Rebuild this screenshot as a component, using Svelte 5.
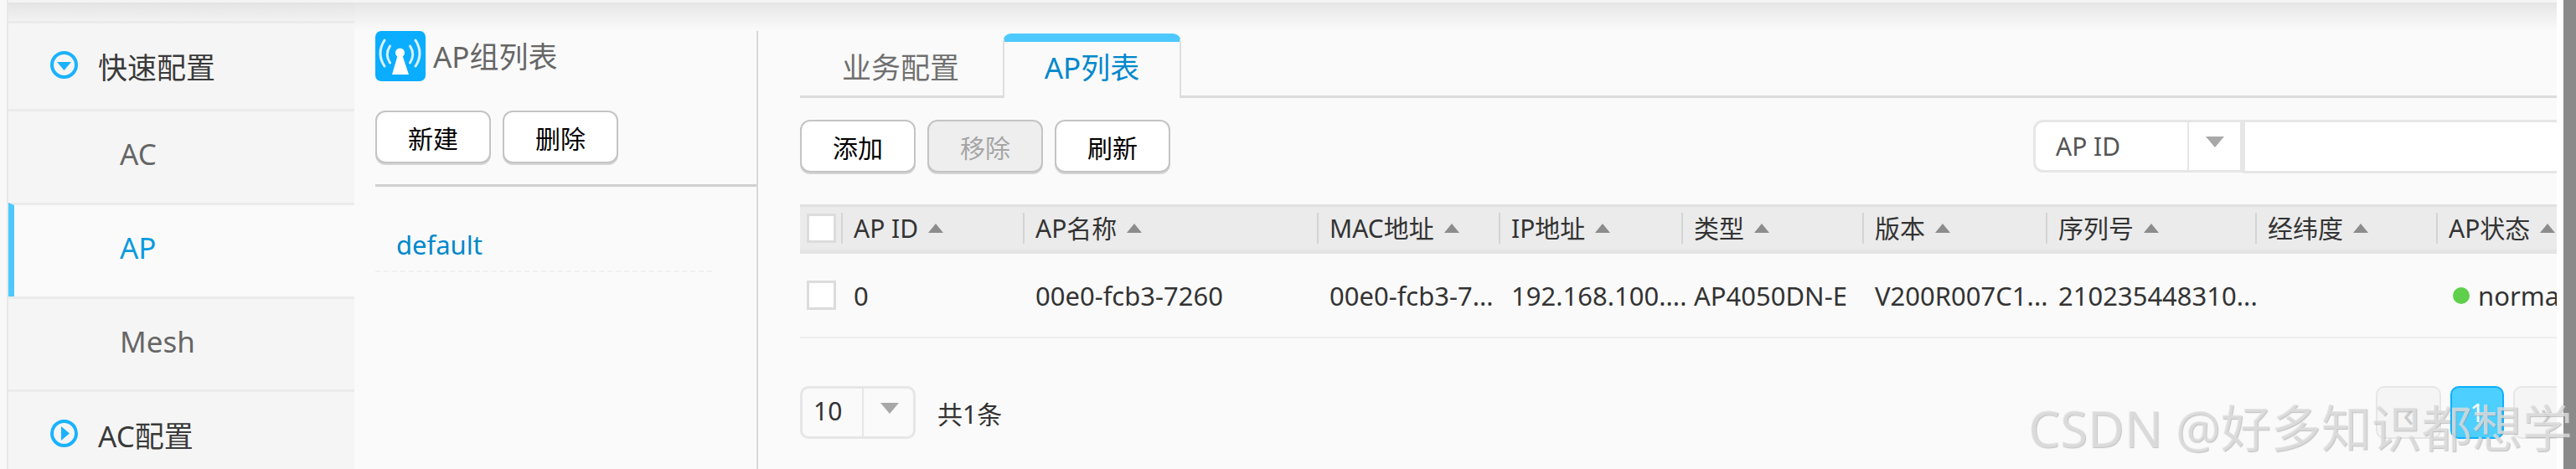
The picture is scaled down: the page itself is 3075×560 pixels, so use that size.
<script>
	const menu = [
		{ label: "快速配置", kind: "group", open: true, h: 105 },
		{ label: "AC", kind: "item", h: 112 },
		{ label: "AP", kind: "item", active: true, h: 112 },
		{ label: "Mesh", kind: "item", h: 111 },
		{ label: "AC配置", kind: "group", open: false, h: 95 }
	];
	const columns = [
		{ title: "AP ID", w: 217, value: "0" },
		{ title: "AP名称", w: 351, value: "00e0-fcb3-7260" },
		{ title: "MAC地址", w: 217, value: "00e0-fcb3-7..." },
		{ title: "IP地址", w: 218, value: "192.168.100...." },
		{ title: "类型", w: 216, value: "AP4050DN-E" },
		{ title: "版本", w: 219, value: "V200R007C1..." },
		{ title: "序列号", w: 250, value: "210235448310..." },
		{ title: "经纬度", w: 216, value: "" },
		{ title: "AP状态", w: 160, value: "normal", status: true }
	];
</script>

<div class="page">
	<div class="gutter"></div>
	<nav class="side">
		<div class="side__shade"></div>
		{#each menu as row}
			<div class="row row--{row.kind}" class:row--active={row.active} style="height: {row.h}px">
				{#if row.kind === "group"}
					<svg class="row__icon" width="33" height="33" viewBox="0 0 33 33">
						<circle cx="16.5" cy="16.5" r="14.5" fill="none" stroke="#1ab2ff" stroke-width="4" />
						{#if row.open}
							<path d="M8 13h17l-8.500 10z" fill="#1ab2ff" />
						{:else}
							<path d="M13 8l10 8.500-10 8.500z" fill="#1ab2ff" />
						{/if}
					</svg>
				{/if}
				<span>{row.label}</span>
			</div>
		{/each}
	</nav>

	<div class="content">
		<div class="shade"></div>
		<div class="panels">
			<section class="groups">
				<header class="groups__title">
					<svg width="60" height="60" viewBox="0 0 60 60">
						<rect width="60" height="60" rx="7" fill="#0aadff" />
						<g fill="none" stroke="#fff" stroke-width="3" stroke-linecap="round" opacity="0.85">
							<path d="M17.500 18Q11 28 17.500 38" />
							<path d="M41.500 18Q48 28 41.500 38" />
							<path d="M11 11Q1 27 11 42" />
							<path d="M48 11Q58 27 48 42" />
						</g>
						<circle cx="29.500" cy="26" r="5.500" fill="#fff" />
						<path d="M27 28h5l8 24H20z" fill="#fff" />
					</svg>
					<h2>AP组列表</h2>
				</header>
				<div class="btns btns--groups">
					<button class="btn">新建</button>
					<button class="btn">删除</button>
				</div>
				<div class="groups__list">
					<a class="groups__item" href="#default">default</a>
				</div>
			</section>

			<section class="main">
				<div class="tabs">
					<div class="tab">业务配置</div>
					<div class="tab tab--active">AP列表</div>
				</div>

				<div class="toolbar">
					<div class="btns">
						<button class="btn btn--wide">添加</button>
						<button class="btn btn--wide" disabled>移除</button>
						<button class="btn btn--wide">刷新</button>
					</div>
					<div class="search">
						<div class="select select--search">
							<span class="select__value">AP ID</span>
							<span class="select__arrow"></span>
						</div>
						<div class="search__input"></div>
					</div>
				</div>

				<div class="table">
					<div class="thead">
						<div class="check check--head"><span class="box"></span></div>
						{#each columns as col}
							<div class="th" style="width: {col.w}px">
								<span>{col.title}</span><i class="sort"></i>
							</div>
						{/each}
					</div>
					<div class="tbody">
						<div class="check"><span class="box"></span></div>
						{#each columns as col}
							<div class="td" class:td--status={col.status} style="width: {col.w}px">
								{#if col.status}<i class="dot"></i>{/if}{col.value}
							</div>
						{/each}
					</div>
				</div>

				<footer class="pager">
					<div class="pager__size">
						<div class="select select--size">
							<span class="select__value">10</span>
							<span class="select__arrow"></span>
						</div>
						<span class="pager__total">共1条</span>
					</div>
					<div class="pager__pages">
						<span class="page-btn page-btn--nav">‹</span>
						<span class="page-btn page-btn--on">1</span>
						<span class="page-btn page-btn--nav">›</span>
					</div>
				</footer>
			</section>
		</div>
	</div>

	<div class="edge"></div>
	<div class="scroll"></div>
	<div class="watermark">CSDN @好多知识都想学</div>
</div>

<style>
	:global(body) {
		margin: 0;
		background: #fafafa;
	}

	.page {
		position: relative;
		display: flex;
		width: 3075px;
		height: 560px;
		overflow: hidden;
		font-family: "Noto Sans", "Noto Sans CJK SC", sans-serif;
		font-size: 30px;
		color: #333;
		background: #fafafa;
	}

	.gutter {
		flex: none;
		width: 8px;
		background: #f8f8f8;
		border-right: 2px solid #e8e8e8;
	}

	.side {
		flex: none;
		width: 413px;
		background: #f5f5f5;
	}

	.side__shade {
		height: 22px;
		background: linear-gradient(#e4e4e4, #f2f2f2);
		border-top: 3px solid #f4f4f4;
	}

	.row {
		box-sizing: border-box;
		display: flex;
		border-top: 3px solid #ebebeb;
		font-size: 35px;
		line-height: 44px;
	}

	.row--group {
		align-items: flex-start;
		padding: 31px 0 0 50px;
		gap: 24px;
		color: #3a3a3a;
	}

	.row--item {
		align-items: center;
		padding: 0 0 7px 133px;
		color: #666;
	}

	.row--active {
		background: #fafafa;
		color: #0a9be0;
		border-left: 7px solid #4dc9ff;
		padding-left: 126px;
	}

	.row__icon {
		flex: none;
		margin-top: 2px;
	}

	.content {
		display: flex;
		flex: none;
		flex-direction: column;
		width: 2629px;
	}

	.shade {
		flex: none;
		height: 34px;
		border-top: 3px solid #f4f4f4;
		background: linear-gradient(#e6e6e6, #fafafa);
	}

	.panels {
		display: flex;
		flex: 1;
		min-height: 0;
	}

	.groups {
		box-sizing: border-box;
		flex: none;
		width: 482px;
		padding-left: 25px;
		border-right: 2px solid #d8d8d8;
	}

	.groups__title {
		display: flex;
		align-items: center;
		gap: 9px;
	}

	.groups__title svg {
		flex: none;
	}

	.groups__title h2 {
		margin: -4px 0 0;
		font-size: 35px;
		font-weight: 400;
		color: #666;
	}

	.btns {
		display: flex;
		gap: 14px;
	}

	.btns--groups {
		margin-top: 35px;
		padding-bottom: 25px;
		border-bottom: 3px solid #d0d0d0;
	}

	.btn {
		box-sizing: border-box;
		width: 138px;
		height: 63px;
		padding: 0;
		font: inherit;
		color: #000;
		background: #fff;
		border: 2px solid #c4c4c4;
		border-radius: 12px;
		box-shadow: 0 2px 0 #d4d4d4;
	}

	.btn:disabled {
		color: #a5a5a5;
		background: #eee;
	}

	.groups__list {
		margin-top: 48px;
		width: 402px;
		padding-bottom: 10px;
		border-bottom: 2px dashed #f0f0f0;
	}

	.groups__item {
		margin-left: 25px;
		font-size: 31px;
		color: #0088cc;
		text-decoration: none;
	}

	.main {
		flex: 1;
		min-width: 0;
		padding: 3px 0 0 50px;
	}

	.tabs {
		box-sizing: border-box;
		display: flex;
		height: 77px;
		padding-left: 242px;
		border-bottom: 3px solid #dcdcdc;
		position: relative;
	}

	.tab {
		box-sizing: border-box;
		position: absolute;
		left: 50px;
		top: 13px;
		font-size: 35px;
		color: #707070;
	}

	.tab--active {
		left: 242px;
		top: 0;
		width: 213px;
		height: 77px;
		padding-top: 3px;
		text-align: center;
		color: #0088cc;
		background: #fafafa;
		border: solid #dedede;
		border-width: 0 2px;
		border-top: 10px solid #4dc9ff;
		border-radius: 10px 10px 0 0;
	}

	.toolbar {
		display: flex;
		align-items: flex-start;
		justify-content: space-between;
		margin-top: 26px;
	}

	.search {
		display: flex;
	}

	.select {
		box-sizing: border-box;
		display: flex;
		align-items: center;
		height: 63px;
		background: #fff;
		border: 3px solid #e6e6e6;
		border-radius: 12px 0 0 12px;
		color: #555;
	}

	.select--search {
		width: 250px;
	}

	.select--search .select__value {
		width: 183px;
		padding-left: 24px;
		box-sizing: border-box;
		border-right: 2px solid #e6e6e6;
		height: 100%;
		line-height: 57px;
	}

	.select__arrow {
		width: 0;
		height: 0;
		margin-left: 20px;
		margin-top: -10px;
		border: solid transparent;
		border-width: 13px 11px 0;
		border-top-color: #a8a8a8;
	}

	.search__input {
		box-sizing: border-box;
		width: 375px;
		height: 64px;
		background: #fff;
		border: solid #e6e6e6;
		border-width: 3px 0 3px 3px;
	}

	.table {
		margin-top: 37px;
	}

	.thead {
		display: flex;
		align-items: center;
		height: 51px;
		background: #ebebeb;
		border-top: 3px solid #e0e0e0;
		border-bottom: 5px solid #e4e4e4;
		overflow: hidden;
		white-space: nowrap;
	}

	.check {
		flex: none;
		width: 49px;
		padding-left: 8px;
		box-sizing: border-box;
		display: flex;
	}

	.box {
		box-sizing: border-box;
		width: 35px;
		height: 35px;
		background: #fff;
		border: 3px solid #dcdcdc;
	}

	.th {
		flex: none;
		box-sizing: border-box;
		display: flex;
		align-items: center;
		gap: 12px;
		height: 37px;
		padding-left: 13px;
		border-left: 2px solid #d4d4d4;
		color: #333;
		line-height: 42px;
	}

	.sort {
		width: 0;
		height: 0;
		border: solid transparent;
		border-width: 0 9px 11px;
		border-bottom-color: #8c8c8c;
	}

	.tbody {
		display: flex;
		align-items: center;
		height: 99px;
		border-bottom: 2px solid #eee;
		white-space: nowrap;
		overflow: hidden;
		font-size: 31px;
	}

	.td {
		flex: none;
		box-sizing: border-box;
		padding-left: 15px;
	}

	.td--status {
		display: flex;
		align-items: center;
		gap: 10px;
		padding-left: 20px;
	}

	.dot {
		flex: none;
		width: 20px;
		height: 20px;
		border-radius: 50%;
		background: #5fcf4c;
	}

	.pager {
		display: flex;
		align-items: flex-start;
		justify-content: space-between;
		margin-top: 57px;
		overflow: hidden;
	}

	.pager__size {
		display: flex;
		align-items: center;
		gap: 26px;
	}

	.select--size {
		width: 138px;
		border-radius: 10px;
		background: #fafafa;
		color: #333;
	}

	.select--size .select__value {
		box-sizing: border-box;
		width: 73px;
		height: 100%;
		padding-left: 13px;
		line-height: 54px;
		border-right: 2px solid #e6e6e6;
	}

	.pager__pages {
		display: flex;
		gap: 11px;
		margin-right: -26px;
	}

	.page-btn {
		box-sizing: border-box;
		display: flex;
		align-items: center;
		justify-content: center;
		height: 63px;
		width: 78px;
		border-radius: 10px;
		color: #ccc;
		background: #f5f5f5;
		border: 2px solid #e6e6e6;
		font-size: 44px;
	}

	.page-btn--on {
		width: 64px;
		background: #4dd0ff;
		border-color: #0ab0ff;
		color: #fff;
		font-size: 30px;
	}

	.edge {
		flex: none;
		width: 8px;
		background: #fff;
	}

	.scroll {
		flex: none;
		width: 15px;
		background: #8a8a8a;
	}

	.watermark {
		position: absolute;
		left: 2421px;
		top: 464px;
		font-size: 60px;
		white-space: nowrap;
		color: rgba(225, 225, 225, 0.75);
		text-shadow: 1px 1px 1px rgba(150, 150, 150, 0.55);
	}
</style>
